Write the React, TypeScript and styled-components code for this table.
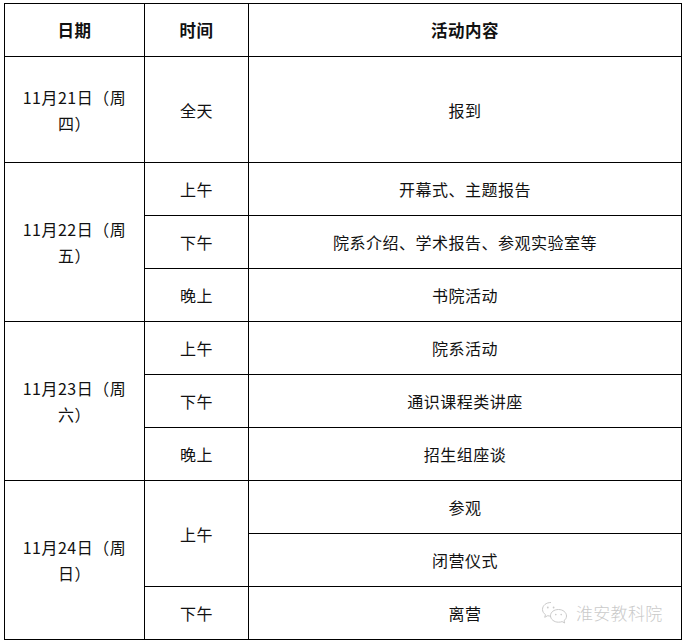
import React from 'react';
import styled, { createGlobalStyle } from 'styled-components';

const GlobalStyle = createGlobalStyle`
  html, body {
    margin: 0;
    padding: 0;
    background: #fff;
    overflow: hidden;
  }
  body {
    font-family: "Noto Sans CJK SC", "Noto Sans", sans-serif;
    color: #111;
  }
`;

const Page = styled.div`
  position: relative;
  padding: 3px 0 0 4px;
  width: 683px;
  height: 642px;
  box-sizing: border-box;
`;

const Table = styled.table`
  width: 677px;
  border-collapse: collapse;
  table-layout: fixed;
  font-size: 16px;
  letter-spacing: 0.5px;
`;

const Row = styled.tr<{ $tall?: boolean }>`
  height: ${(p) => (p.$tall ? '106px' : '53px')};
`;

const Cell = styled.td<{ $head?: boolean }>`
  border: 1px solid #000;
  padding: 0 10px;
  text-align: center;
  vertical-align: middle;
  line-height: 26px;
  font-weight: ${(p) => (p.$head ? 700 : 400)};
  font-size: ${(p) => (p.$head ? '16.5px' : '16px')};
  color: #111;
`;

const Watermark = styled.div`
  position: absolute;
  left: 541px;
  top: 600px;
  display: flex;
  align-items: center;
  gap: 8px;
  pointer-events: none;
`;

const MarkText = styled.span`
  font-size: 17px;
  font-weight: 300;
  color: #cacaca;
  letter-spacing: 0.3px;
`;

type Item = { date?: [string, number]; time?: [string, number]; content: string; tall?: boolean };

const rows: Item[] = [
  { date: ['11月21日（周四）', 1], time: ['全天', 1], content: '报到', tall: true },
  { date: ['11月22日（周五）', 3], time: ['上午', 1], content: '开幕式、主题报告' },
  { time: ['下午', 1], content: '院系介绍、学术报告、参观实验室等' },
  { time: ['晚上', 1], content: '书院活动' },
  { date: ['11月23日（周六）', 3], time: ['上午', 1], content: '院系活动' },
  { time: ['下午', 1], content: '通识课程类讲座' },
  { time: ['晚上', 1], content: '招生组座谈' },
  { date: ['11月24日（周日）', 3], time: ['上午', 2], content: '参观' },
  { content: '闭营仪式' },
  { time: ['下午', 1], content: '离营' },
];

const WeChatIcon = () => (
  <svg width="27" height="24" viewBox="0 0 27 24" fill="none" stroke="#cacaca" strokeWidth="1">
    <path d="M10 1.5C5 1.5 1.5 4.6 1.5 8.4c0 2.2 1.2 4 3 5.3l-.8 2.6 3-1.6c1 .3 2 .4 3.1.4" />
    <circle cx="6.8" cy="6.5" r="0.9" fill="#cacaca" stroke="none" />
    <circle cx="12.6" cy="6.5" r="0.9" fill="#cacaca" stroke="none" />
    <path d="M17.5 8.5c4.4 0 8 2.9 8 6.5 0 1.9-1 3.5-2.5 4.7l.7 2.3-2.6-1.4c-1.1.4-2.3.6-3.6.6-4.4 0-8-2.9-8-6.5s3.6-6.2 8-6.2z" />
    <circle cx="14.8" cy="13.6" r="0.8" fill="#cacaca" stroke="none" />
    <circle cx="20.2" cy="13.6" r="0.8" fill="#cacaca" stroke="none" />
  </svg>
);

export default function App() {
  return (
    <Page>
      <GlobalStyle />
      <Table>
        <colgroup>
          <col style={{ width: 140 }} />
          <col style={{ width: 104 }} />
          <col style={{ width: 433 }} />
        </colgroup>
        <thead>
          <Row>
            <Cell as="th" $head>日期</Cell>
            <Cell as="th" $head>时间</Cell>
            <Cell as="th" $head>活动内容</Cell>
          </Row>
        </thead>
        <tbody>
          {rows.map((r, i) => (
            <Row key={i} $tall={r.tall}>
              {r.date && <Cell rowSpan={r.date[1]}>{r.date[0]}</Cell>}
              {r.time && <Cell rowSpan={r.time[1]}>{r.time[0]}</Cell>}
              <Cell>{r.content}</Cell>
            </Row>
          ))}
        </tbody>
      </Table>
      <Watermark>
        <WeChatIcon />
        <MarkText>淮安教科院</MarkText>
      </Watermark>
    </Page>
  );
}
